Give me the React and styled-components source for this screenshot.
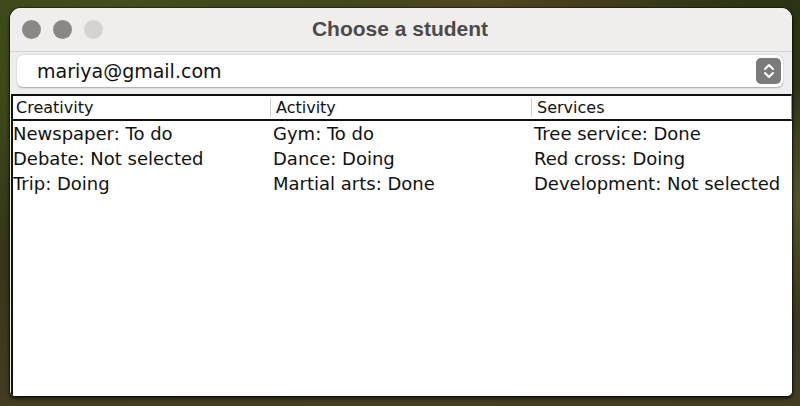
import React from 'react';
import styled, { createGlobalStyle } from 'styled-components';

const GlobalStyle = createGlobalStyle`
  html, body {
    margin: 0;
    padding: 0;
  }
  body {
    width: 800px;
    height: 406px;
    overflow: hidden;
    font-family: "DejaVu Sans", "Liberation Sans", sans-serif;
  }
`;

const COLUMNS = ['Creativity', 'Activity', 'Services'];

const ROWS = [
  ['Newspaper: To do', 'Gym: To do', 'Tree service: Done'],
  ['Debate: Not selected', 'Dance: Doing', 'Red cross: Doing'],
  ['Trip: Doing', 'Martial arts: Done', 'Development: Not selected'],
];

export default function App() {
  return (
    <>
      <GlobalStyle />
      <Desktop>
        <Window>
          <TitleBar>
            <Lights>
              <Light />
              <Light />
              <Light $disabled />
            </Lights>
            <Title>Choose a student</Title>
          </TitleBar>
          <ComboRow>
            <Combo>
              <ComboText>mariya@gmail.com</ComboText>
              <ComboArrow>
                <svg width="14" height="18" viewBox="0 0 14 18">
                  <path
                    d="M3 7 L7 3 L11 7 M3 11 L7 15 L11 11"
                    fill="none"
                    stroke="#fff"
                    strokeWidth="2"
                    strokeLinecap="round"
                    strokeLinejoin="round"
                  />
                </svg>
              </ComboArrow>
            </Combo>
          </ComboRow>
          <Table>
            <Header>
              {COLUMNS.map((name, i) => (
                <HeadCell key={name} $first={i === 0}>
                  {name}
                </HeadCell>
              ))}
            </Header>
            <Body>
              {ROWS.map((row, r) => (
                <Row key={r}>
                  {row.map((cell, c) => (
                    <Cell key={c} $first={c === 0}>
                      {cell}
                    </Cell>
                  ))}
                </Row>
              ))}
            </Body>
          </Table>
        </Window>
      </Desktop>
    </>
  );
}

const Desktop = styled.div`
  width: 800px;
  height: 406px;
  box-sizing: border-box;
  padding: 8px 8px 10px 10px;
  background:
    radial-gradient(ellipse at 15% 10%, #46521e 0%, transparent 45%),
    radial-gradient(ellipse at 60% 0%, #54431f 0%, transparent 40%),
    radial-gradient(ellipse at 95% 50%, #56552a 0%, transparent 40%),
    radial-gradient(ellipse at 50% 100%, #463f24 0%, transparent 50%),
    linear-gradient(180deg, #2a3415 0%, #343418 60%, #433d22 100%);
`;

const Window = styled.div`
  width: 782px;
  height: 388px;
  display: flex;
  flex-direction: column;
  background: #eeeeee;
  border-radius: 11px 11px 5px 5px;
  overflow: hidden;
  box-shadow: 0 2px 4px rgba(0, 0, 0, 0.85), 0 0 0 1px rgba(0, 0, 0, 0.35);
`;

const TitleBar = styled.div`
  position: relative;
  height: 43px;
  flex: none;
  display: flex;
  align-items: center;
  justify-content: center;
  background: #efeeed;
  border-bottom: 1px solid #d3d3d3;
`;

const Lights = styled.div`
  position: absolute;
  left: 12px;
  top: 12px;
  display: flex;
  gap: 12px;
`;

const Light = styled.span`
  width: 19px;
  height: 19px;
  border-radius: 50%;
  background: ${(p) => (p.$disabled ? '#d3d3d3' : '#888888')};
`;

const Title = styled.div`
  font-family: "Liberation Sans", Arial, sans-serif;
  font-weight: 700;
  font-size: 21px;
  color: #4b4b4b;
  margin: -1px 0 0 -2px;
`;

const ComboRow = styled.div`
  flex: none;
  padding: 3px 9px 7px 7px;
  background: #eeeeee;
`;

const Combo = styled.div`
  height: 32px;
  display: flex;
  align-items: center;
  justify-content: space-between;
  background: #fff;
  border-radius: 6px;
  box-shadow: 0 0.5px 1.5px rgba(0, 0, 0, 0.3);
  padding: 0 2px 0 20px;
`;

const ComboText = styled.span`
  font-size: 19px;
  color: #111;
`;

const ComboArrow = styled.span`
  width: 25px;
  height: 26px;
  border-radius: 5px;
  background: #7b7b7b;
  display: flex;
  align-items: center;
  justify-content: center;
`;

const Table = styled.div`
  flex: 1;
  display: flex;
  flex-direction: column;
  background: #fff;
  margin-left: 1px;
  border-left: 2px solid #111;
`;

const Header = styled.div`
  display: grid;
  grid-template-columns: 257px 261px 1fr;
  height: 23px;
  border-top: 2px solid #111;
  border-bottom: 2px solid #111;
  border-right: 1px solid #999;
`;

const HeadCell = styled.div`
  font-size: 16px;
  color: #111;
  padding-left: ${(p) => (p.$first ? '3px' : '5px')};
  border-left: ${(p) => (p.$first ? 'none' : '1px solid #cfcfcf')};
  margin: ${(p) => (p.$first ? '0' : '2px 0')};
  line-height: ${(p) => (p.$first ? '23px' : '19px')};
`;

const Body = styled.div`
  display: flex;
  flex-direction: column;
`;

const Row = styled.div`
  display: grid;
  grid-template-columns: 258px 261px 1fr;
  height: 25px;
  align-items: center;
`;

const Cell = styled.div`
  font-size: 18px;
  color: #111;
  white-space: nowrap;
  padding-left: ${(p) => (p.$first ? '0' : '2px')};
`;
